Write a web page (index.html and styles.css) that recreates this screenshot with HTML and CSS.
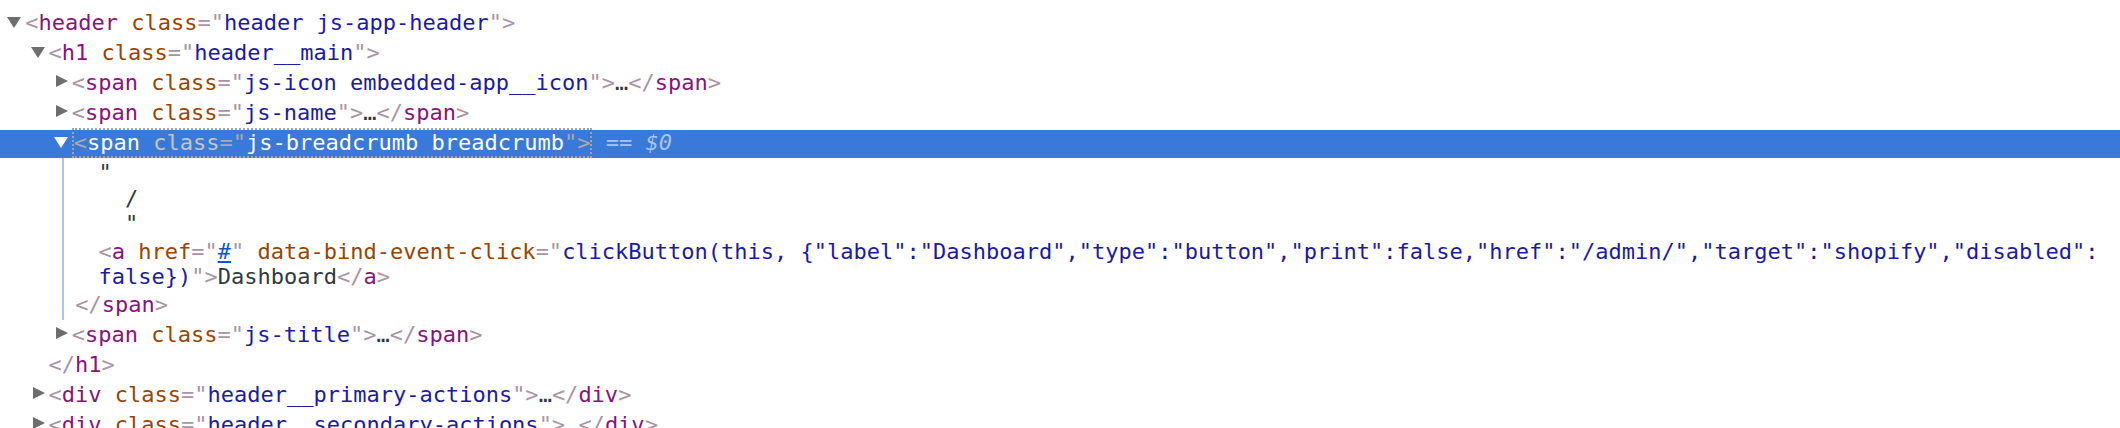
FILE: index.html
```html
<!DOCTYPE html>
<html lang="en">
<head>
<meta charset="utf-8">
<title>Elements</title>
<link rel="stylesheet" href="styles.css">
</head>
<body>
<div class="tree">
  <div class="row d0"><span class="tri down"></span><span class="p">&lt;</span><span class="t">header</span> <span class="an">class</span><span class="p">="</span><span class="av">header js-app-header</span><span class="p">"&gt;</span></div>
  <div class="row d1"><span class="tri down"></span><span class="p">&lt;</span><span class="t">h1</span> <span class="an">class</span><span class="p">="</span><span class="av">header__main</span><span class="p">"&gt;</span></div>
  <div class="row d2"><span class="tri right"></span><span class="p">&lt;</span><span class="t">span</span> <span class="an">class</span><span class="p">="</span><span class="av">js-icon embedded-app__icon</span><span class="p">"&gt;</span><span class="ell">…</span><span class="p">&lt;/</span><span class="t">span</span><span class="p">&gt;</span></div>
  <div class="row d2"><span class="tri right"></span><span class="p">&lt;</span><span class="t">span</span> <span class="an">class</span><span class="p">="</span><span class="av">js-name</span><span class="p">"&gt;</span><span class="ell">…</span><span class="p">&lt;/</span><span class="t">span</span><span class="p">&gt;</span></div>
  <div class="row d2 selected"><span class="tri down"></span><span class="focus"><span class="p">&lt;</span><span class="t">span</span> <span class="an">class</span><span class="p">="</span><span class="av">js-breadcrumb breadcrumb</span><span class="p">"&gt;</span></span> <span class="hint">== <i>$0</i></span></div>
  <div class="sel-kids">
    <div class="row leaf text">"
  /
  "</div>
    <div class="row leaf"><span class="p">&lt;</span><span class="t">a</span> <span class="an">href</span><span class="p">="</span><span class="link">#</span><span class="p">"</span> <span class="an">data-bind-event-click</span><span class="p">="</span><span class="av">clickButton(this, {"label":"Dashboard","type":"button","print":false,"href":"/admin/","target":"shopify","disabled":<br>false})</span><span class="p">"&gt;</span>Dashboard<span class="p">&lt;/</span><span class="t">a</span><span class="p">&gt;</span></div>
    <div class="row closer"><span class="p">&lt;/</span><span class="t">span</span><span class="p">&gt;</span></div>
  </div>
  <div class="row d2"><span class="tri right"></span><span class="p">&lt;</span><span class="t">span</span> <span class="an">class</span><span class="p">="</span><span class="av">js-title</span><span class="p">"&gt;</span><span class="ell">…</span><span class="p">&lt;/</span><span class="t">span</span><span class="p">&gt;</span></div>
  <div class="row d1"><span class="p">&lt;/</span><span class="t">h1</span><span class="p">&gt;</span></div>
  <div class="row d1"><span class="tri right"></span><span class="p">&lt;</span><span class="t">div</span> <span class="an">class</span><span class="p">="</span><span class="av">header__primary-actions</span><span class="p">"&gt;</span><span class="ell">…</span><span class="p">&lt;/</span><span class="t">div</span><span class="p">&gt;</span></div>
  <div class="row d1"><span class="tri right"></span><span class="p">&lt;</span><span class="t">div</span> <span class="an">class</span><span class="p">="</span><span class="av">header__secondary-actions</span><span class="p">"&gt;</span><span class="ell">…</span><span class="p">&lt;/</span><span class="t">div</span><span class="p">&gt;</span></div>
</div>
</body>
</html>
```
FILE: styles.css
```css
html, body {
  margin: 0;
  padding: 0;
  background: #ffffff;
}

body {
  font-family: "DejaVu Sans Mono", "Liberation Mono", monospace;
  font-size: 22px;
  line-height: 25.6px;
  color: #303942;
  overflow: hidden;
}

.tree {
  padding-top: 8px;
}

.row {
  margin-top: 2px;
  min-height: 28px;
  white-space: nowrap;
}

.d0 { padding-left: 25.2px; }
.d1 { padding-left: 48.5px; }
.d2 { padding-left: 71.8px; }

.tri {
  display: inline-block;
  width: 0;
  height: 0;
  vertical-align: baseline;
}

.tri.down {
  border-left: 7px solid transparent;
  border-right: 7px solid transparent;
  border-top: 11px solid #6e6e6e;
  margin: 0 4px 2px -18px;
}

.tri.right {
  border-top: 6.5px solid transparent;
  border-bottom: 6.5px solid transparent;
  border-left: 12px solid #6e6e6e;
  margin: 0 4px 3px -16px;
}

.p { color: #a894a6; }
.t { color: #881280; }
.an { color: #994500; }
.av { color: #1a1aa6; }
.ell { color: #303942; }
.link {
  color: #1155cc;
  text-decoration: underline;
}

.row.selected {
  background: #3879d9;
  color: #ffffff;
}

.selected .tri.down { border-top-color: #ffffff; }
.selected .p { color: #a9a9ad; }
.selected .an { color: #c9c5be; }
.selected .t,
.selected .av { color: #ffffff; }

.focus {
  display: inline-block;
  border: 2px dotted #a3a3a3;
  margin: -2px 0;
}

.hint {
  color: #a9c4ee;
}

.hint i {
  font-style: italic;
}

.sel-kids {
  display: flow-root;
  margin-left: 61.7px;
  border-left: 2px solid #a9c6f2;
}

.sel-kids .leaf { padding-left: 34.8px; }
.sel-kids .closer { padding-left: 11.5px; }

.text {
  white-space: pre;
  color: #303942;
}
```
